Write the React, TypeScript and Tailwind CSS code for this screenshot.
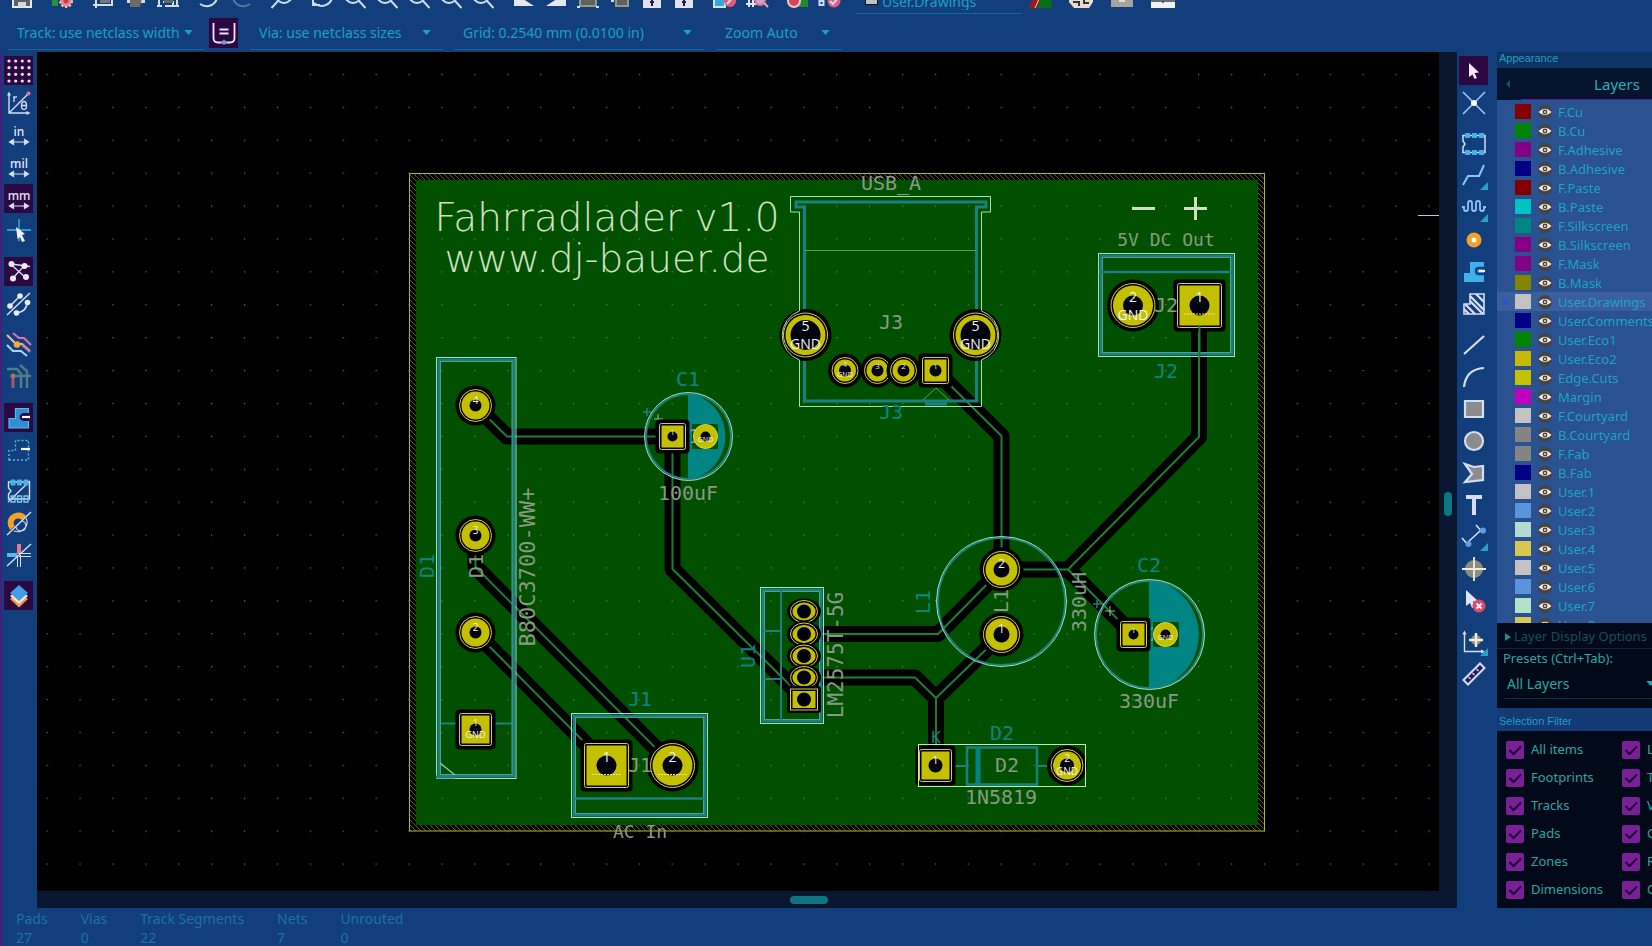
import { useState } from 'react'
import type { ReactNode } from 'react'

const layers = [
  ['F.Cu', '#840000'],
  ['B.Cu', '#008400'],
  ['F.Adhesive', '#840084'],
  ['B.Adhesive', '#000084'],
  ['F.Paste', '#840000'],
  ['B.Paste', '#00c2c2'],
  ['F.Silkscreen', '#008484'],
  ['B.Silkscreen', '#840084'],
  ['F.Mask', '#840084'],
  ['B.Mask', '#848400'],
  ['User.Drawings', '#c2c2c2'],
  ['User.Comments', '#000084'],
  ['User.Eco1', '#008400'],
  ['User.Eco2', '#c8b800'],
  ['Edge.Cuts', '#c2c200'],
  ['Margin', '#c200c2'],
  ['F.Courtyard', '#c2c2c2'],
  ['B.Courtyard', '#848484'],
  ['F.Fab', '#848484'],
  ['B.Fab', '#000084'],
  ['User.1', '#c2c2c2'],
  ['User.2', '#5994dc'],
  ['User.3', '#b4dbd2'],
  ['User.4', '#d8c852'],
  ['User.5', '#c2c2c2'],
  ['User.6', '#5994dc'],
  ['User.7', '#b4e2c8'],
  ['User.8', '#d8c852'],
]

const filters = [
  ['All items', 'Locked items'],
  ['Footprints', 'Text'],
  ['Tracks', 'Vias'],
  ['Pads', 'Graphics'],
  ['Zones', 'Rule Areas'],
  ['Dimensions', 'Other items'],
]

const stats = [
  ['Pads', '27'],
  ['Vias', '0'],
  ['Track Segments', '22'],
  ['Nets', '7'],
  ['Unrouted', '0'],
]

/* ---------- toolbar parts ---------- */

type ToolProps = { label: string; active?: boolean; sub?: boolean; children: ReactNode }

function Tool({ label, active, sub, children }: ToolProps) {
  return (
    <button
      aria-label={label}
      className={`relative flex h-[29px] w-[29px] shrink-0 items-center justify-center ${active ? 'bg-[#2c0840]' : ''}`}
    >
      <svg viewBox="0 0 24 24" className="h-6 w-6 overflow-visible" fill="none" stroke="#d5dcf5" strokeWidth="1.8">
        {children}
      </svg>
      {sub && (
        <svg viewBox="0 0 8 8" className="absolute right-0 bottom-0 h-2 w-2" fill="#22a5c6">
          <path d="M8 0V8H0Z" />
        </svg>
      )}
    </button>
  )
}

function TopTool({ label, children }: { label: string; children: ReactNode }) {
  return (
    <button aria-label={label} className="flex h-6 w-8 shrink-0 justify-center">
      <svg viewBox="0 0 24 24" className="h-6 w-6" fill="none" stroke="#c9dcf2" strokeWidth="2">
        {children}
      </svg>
    </button>
  )
}

const TopSep = () => <span className="w-[9px] shrink-0" />
const SideSep = () => <span className="h-[6px] shrink-0" />

const Arrows = () => <path d="M3 19H21M6.500 16.500L2.500 19L6.500 21.500ZM17.500 16.500L21.500 19L17.500 21.500Z" fill="#d5dcf5" strokeWidth="1.2" />

const UnitText = ({ children }: { children: string }) => (
  <text x="12" y="13" textAnchor="middle" fontSize="12" fill="#e2e4f8" stroke="none" className="font-['Noto_Sans',sans-serif] font-medium">
    {children}
  </text>
)

const ZoomGlass = () => (
  <>
    <circle cx="10" cy="10" r="8" />
    <path d="M16 16L22.500 23" />
  </>
)

function DropDown({ label, value, className }: { label: string; value: string; className: string }) {
  return (
    <div className={`grid shrink-0 items-center border-b border-[#12669a] ${className}`}>
      <select
        aria-label={label}
        className="col-start-1 row-start-1 h-full w-full appearance-none bg-transparent pl-[9px] text-[14px] text-[#1c9fc4] outline-none"
      >
        <option>{value}</option>
      </select>
      <svg viewBox="0 0 10 6" className="pointer-events-none col-start-1 row-start-1 mr-[12px] h-[5px] w-[9px] justify-self-end" fill="#1c9fc4">
        <path d="M0 0H10L5 6Z" />
      </svg>
    </div>
  )
}

function TopToolbar() {
  return (
    <div className="flex h-[14px] items-end overflow-hidden pl-[6px]">
      <div className="flex items-end pb-[5px]">
        <TopTool label="Save">
          <path d="M3 3H21V22H3Z" fill="#5a6068" stroke="#e6e8ee" />
          <path d="M8 17H16V22H8Z" fill="#d8d8d8" stroke="none" />
        </TopTool>
        <TopSep />
        <TopTool label="Board setup">
          <circle cx="15" cy="16" r="6" fill="#e88a8a" stroke="#f0d0c8" strokeDasharray="2 2" />
          <circle cx="15" cy="16" r="2.500" fill="#c83a4c" stroke="none" />
          <path d="M1 14H7V21H1Z" fill="#2a8f3a" stroke="none" />
        </TopTool>
        <TopSep />
        <TopTool label="Page settings">
          <path d="M4 4H20V20H4ZM1 20H20M4 23V14" stroke="#d8dce6" />
          <path d="M8 6H18V18H8Z" fill="#777" stroke="none" />
        </TopTool>
        <TopTool label="Print">
          <path d="M3 8H21V18H3Z" fill="#d8d8d8" stroke="none" />
          <path d="M6 13H18L16 22H6Z" fill="#6b6b66" stroke="none" />
        </TopTool>
        <TopTool label="Plot">
          <path d="M3 6V22M1 21H6M21 6V22M18 21H23M7 17H17V21H9" stroke="#d8dce6" />
          <path d="M8 10H17V18H8Z" fill="#666" stroke="none" />
        </TopTool>
        <TopSep />
        <TopTool label="Undo"><path d="M3 19C10 24 20 20 20 11" /></TopTool>
        <TopTool label="Redo"><path d="M21 19C14 24 4 20 4 11" stroke="#55779f" /></TopTool>
        <TopSep />
        <TopTool label="Find">
          <circle cx="14" cy="10" r="8" />
          <path d="M8 16L1.500 23" />
        </TopTool>
        <TopSep />
        <TopTool label="Refresh"><path d="M2 13V20H9M3 18C10 24 21 20 21 11" /></TopTool>
        <TopTool label="Zoom in"><ZoomGlass /></TopTool>
        <TopTool label="Zoom out"><ZoomGlass /></TopTool>
        <TopTool label="Zoom to page"><ZoomGlass /></TopTool>
        <TopTool label="Zoom to objects"><ZoomGlass /></TopTool>
        <TopTool label="Zoom to selection"><ZoomGlass /></TopTool>
        <TopSep />
        <TopTool label="Rotate counterclockwise"><path d="M2 8L22 21H2Z" fill="#e4e8f2" stroke="none" /></TopTool>
        <TopTool label="Rotate clockwise"><path d="M22 8L2 21H22Z" fill="#e4e8f2" stroke="none" /></TopTool>
        <TopTool label="Group">
          <path d="M4 4H20V21H4Z" fill="#5c635f" stroke="#9b9a7e" />
          <path d="M1 22H4M20 22H23" />
        </TopTool>
        <TopTool label="Ungroup">
          <path d="M8 8H20V21H8Z" fill="#5c635f" stroke="#9b9a7e" />
          <path d="M3 16H6" />
        </TopTool>
        <TopTool label="Lock">
          <path d="M3 8H21V23H3Z" fill="#e4e0ee" stroke="none" />
          <path d="M12 14V21M10 17H14" stroke="#222240" />
        </TopTool>
        <TopTool label="Unlock">
          <path d="M3 8H21V23H3Z" fill="#e4e0ee" stroke="none" />
          <path d="M12 14V21M10 17H14" stroke="#222240" />
        </TopTool>
        <TopSep />
        <TopTool label="Update board">
          <path d="M1 14H12V22H1Z" fill="#3aa6dc" stroke="#cfe8f8" />
          <circle cx="17" cy="16" r="6" fill="#e05a72" stroke="none" />
          <path d="M14 19L20 12" />
        </TopTool>
        <TopTool label="Footprint browser">
          <path d="M1 19H12M4 14V22M8 14V22" stroke="#e8e4f0" />
          <circle cx="15" cy="15" r="5" fill="#c9a4d2" stroke="#e0708a" />
          <path d="M19 18L23 22" stroke="#e9a9b4" />
        </TopTool>
        <TopSep />
        <TopTool label="3D viewer">
          <path d="M12 8H22V22H12Z" fill="#1f8a30" stroke="none" />
          <circle cx="8" cy="16" r="6" fill="#d2485a" stroke="#efc6ce" />
        </TopTool>
        <TopTool label="Design rules">
          <path d="M1.500 16H5.500V20H1.500Z" />
          <circle cx="16" cy="16" r="6.500" fill="#e0607c" stroke="none" />
          <path d="M12 16L15 19L20 13" />
        </TopTool>
        <TopSep />
      </div>
      <div className="flex h-6 w-[167px] shrink-0 items-end border-b border-[#12669a] pl-[10px]">
        <span className="mb-2 h-[13px] w-[13px] shrink-0 border border-[#101820] bg-[#c2c2c2]" />
        <select aria-label="Active layer" className="h-5 w-full appearance-none bg-transparent pb-[2px] pl-1 text-[14px] leading-4 text-[#1c9fc4] outline-none">
          <option>User.Drawings</option>
        </select>
      </div>
      <div className="flex items-end pb-1 pl-[2px]">
        <TopTool label="Layer pair">
          <path d="M0 22L8 8H12V22Z" fill="#a01818" stroke="none" />
          <path d="M9 22L14 8H22L24 22Z" fill="#0a6e14" stroke="none" />
          <path d="M7 22L12 11" strokeWidth="1" />
        </TopTool>
        <TopSep />
        <TopTool label="Scripting console">
          <path d="M0 8H24V16L20 22H5L0 16Z" fill="#e6dcd2" stroke="none" />
          <path d="M4 16H10V20M15 12V17H20" stroke="#333" />
        </TopTool>
        <TopSep />
        <TopTool label="Plugin">
          <path d="M1 8H23V21H1Z" fill="#a3a3a0" stroke="none" />
          <path d="M9 15H15" stroke="#ddd" />
        </TopTool>
        <TopSep />
        <TopTool label="Bill of materials">
          <path d="M0 8H24V22H0Z" fill="#eef2f2" stroke="none" />
          <path d="M0 15H24M12 15V17" stroke="#31434a" strokeWidth="1.500" />
        </TopTool>
      </div>
    </div>
  )
}

function OptionsBar() {
  return (
    <div className="flex h-[38px] items-start pt-[1px] pl-2">
      <DropDown label="Track width" value="Track: use netclass width" className="mr-1 h-[35px] w-[197px]" />
      <button aria-label="Auto track width" className="mt-[3px] mr-3 flex h-[30px] w-[29px] shrink-0 items-center justify-center bg-[#2c0840]">
        <svg viewBox="0 0 24 24" className="h-6 w-6" fill="none" stroke="#efe6fb" strokeWidth="1.800">
          <path d="M1.500 2V17Q1.500 21.500 6 21.500H18Q22.500 21.500 22.500 17V2M7.500 8.500H16.500M7.500 12.500H16.500" />
          <path d="M12 18.500L15.500 21.500L12 24L8.500 21.500Z" fill="#5f9fe0" stroke="none" />
        </svg>
      </button>
      <DropDown label="Via size" value="Via: use netclass sizes" className="mr-[11px] h-[35px] w-[193px]" />
      <DropDown label="Grid" value="Grid: 0.2540 mm (0.0100 in)" className="mr-3 h-[35px] w-[250px]" />
      <DropDown label="Zoom" value="Zoom Auto" className="h-[35px] w-[126px]" />
    </div>
  )
}

function LeftToolbar() {
  return (
    <nav aria-label="Display options" className="flex w-[37px] shrink-0 flex-col gap-[3px] border-l-2 border-[#43207a] pt-1 pl-[2px]">
      <Tool label="Show grid" active>
        {[2, 8.7, 15.3, 22].map((y) =>
          [2, 8.7, 15.3, 22].map((x) => <circle key={`${x}-${y}`} cx={x} cy={y} r="1.600" fill="#f3d9f0" stroke="none" />),
        )}
      </Tool>
      <Tool label="Polar coordinates">
        <path d="M2 3V22H21M2 22L22 2" strokeWidth="1.400" />
        <path d="M0 4.500L2 0.500L4 4.500ZM19.500 20L23.500 22L19.500 24Z" fill="#d5dcf5" stroke="none" />
        <circle cx="21.500" cy="2.500" r="2" fill="#e07a90" stroke="none" />
        <ellipse cx="17" cy="14.500" rx="2.500" ry="4" strokeWidth="1.300" />
        <path d="M14.500 14.500H19.500M7 11V5M7 7.500Q8 5.500 10 6" strokeWidth="1.300" />
      </Tool>
      <Tool label="Inches"><UnitText>in</UnitText><Arrows /></Tool>
      <Tool label="Mils"><UnitText>mil</UnitText><Arrows /></Tool>
      <Tool label="Millimeters" active><UnitText>mm</UnitText><Arrows /></Tool>
      <Tool label="Full window crosshair">
        <path d="M0 11H24M12 0V22" stroke="#3fb6e4" strokeWidth="1.300" />
        <path d="M9 8L18 15L15 16L18 22L15 23L13 18L10.500 20Z" fill="#f0f2ff" stroke="none" />
      </Tool>
      <SideSep />
      <Tool label="Show ratsnest" active>
        <path d="M4 4.500L18 17M6 18L17 6M4 4L23 6.500" strokeWidth="1.300" />
        <g fill="#f6e8ff" stroke="none">
          <circle cx="4.500" cy="4" r="3" /><circle cx="17.500" cy="6" r="3" /><circle cx="6" cy="18.500" r="3" /><circle cx="19" cy="17" r="3" />
        </g>
      </Tool>
      <Tool label="Curved ratsnest">
        <path d="M0 23L23 1M3 14L13 4M9 21Q20 20 20 10" strokeWidth="1.500" />
        <g fill="#e6ebff" stroke="none">
          <circle cx="3" cy="14" r="2.800" /><circle cx="13" cy="4" r="2.800" /><circle cx="9.500" cy="21" r="2.800" /><circle cx="20.500" cy="10.500" r="2.800" />
        </g>
      </Tool>
      <SideSep />
      <Tool label="Net highlight">
        <path d="M0 2L9 11H15L23 18" stroke="#f0b9a0" strokeWidth="2" />
        <path d="M6 0L12 5H17L24 12M15 12L23 19" stroke="#d076b4" strokeWidth="2" />
        <path d="M0 12L6 18H14L20 23" stroke="#a8d4f6" strokeWidth="2" />
        <circle cx="10" cy="11.500" r="3.300" fill="#f6a63c" stroke="none" />
      </Tool>
      <Tool label="Net colors">
        <path d="M0 4H10L14 9V23M13 0L20 6V23M6 11H24" stroke="#4f7d86" strokeWidth="2.400" />
        <path d="M6 11V23" stroke="#a05a6c" strokeWidth="3" />
        <circle cx="6" cy="11" r="2.500" fill="#a07a48" stroke="none" />
      </Tool>
      <SideSep />
      <Tool label="Filled zones" active>
        <path d="M2 22V12.500H8.500V2.500H21.500V22Z" fill="#2f8fd0" stroke="#58b8f0" strokeWidth="1.200" />
        <path d="M22 7.500H18Q13 7.500 13 11T18 14.500H22" fill="#2c0840" stroke="#2c0840" strokeWidth="1" />
        <path d="M15 11H23" stroke="#fff" strokeWidth="2.200" />
      </Tool>
      <Tool label="Zone outlines">
        <path d="M2 22V12.500H8.500V2.500H21.500V22Z" stroke="#58b8f0" strokeDasharray="2 2" strokeWidth="1.400" />
        <path d="M14 11H23" stroke="#fff" strokeWidth="2.200" />
      </Tool>
      <SideSep />
      <Tool label="Sketch footprints">
        <path d="M1.500 3H22.500V20H1.500V15L4 12L1.500 9ZM1 23L23 2" strokeWidth="1.400" />
        <path d="M4 1H8V6H4ZM10.500 1H14.500V6H10.500ZM17 1H21V6H17Z" fill="#45b2ea" stroke="#45b2ea" strokeWidth="1" />
        <path d="M4 17H8V23H4ZM10.500 17H14.500V23H10.500ZM17 17H21V23H17Z" stroke="#7ecdf4" strokeWidth="1.300" />
      </Tool>
      <Tool label="Sketch vias">
        <path d="M5.500 17A7 7 0 1 1 17 7" stroke="#f5a02a" strokeWidth="6" />
        <path d="M19 7A9.500 9.500 0 0 1 7 20M15 10A5 5 0 1 1 9 16" strokeWidth="1.100" />
        <path d="M0 24L24 1" strokeWidth="1.400" />
      </Tool>
      <Tool label="Sketch tracks">
        <path d="M0 12H10" stroke="#58b8f0" strokeWidth="4" />
        <path d="M12 1V11" stroke="#e87a8c" strokeWidth="4" />
        <path d="M10.500 12V24M13.500 12V24M12 10.500H24M12 13.500H24" strokeWidth="1" />
        <path d="M0 23L24 1" strokeWidth="1.400" />
      </Tool>
      <SideSep />
      <Tool label="Appearance manager" active>
        <path d="M3 15L12 8L21 15L12 23.500Z" fill="#f09a4a" stroke="none" />
        <path d="M3 12L12 5L21 12L12 20Z" fill="#f8e6c8" stroke="none" />
        <path d="M3 9L12 1L21 9L12 17Z" fill="#3f9fe8" stroke="none" />
      </Tool>
    </nav>
  )
}

function RightToolbar() {
  return (
    <nav aria-label="Drawing tools" className="flex w-[40px] shrink-0 flex-col gap-[3px] pt-1 pl-[2px]">
      <Tool label="Select" active>
        <path d="M7 4L17 13.500L12.500 14L15 19L12.500 20L10.500 15.500L7 18Z" fill="#f6e8ff" stroke="none" />
      </Tool>
      <Tool label="Local ratsnest">
        <path d="M1 1L23 23M23 1L1 23" stroke="#a9c4f0" strokeWidth="1.600" />
        <circle cx="12" cy="12" r="3" fill="#fff" stroke="none" />
      </Tool>
      <SideSep />
      <Tool label="Add footprint">
        <path d="M1 3.500H23V20.500H1V15L3 12L1 9Z" strokeWidth="1.500" />
        <path d="M3 1H8V6H3ZM10 1H15V6H10ZM17 1H22V6H17ZM3 18H8V23H3ZM10 18H15V23H10ZM17 18H22V23H17Z" fill="#45b2ea" stroke="none" />
      </Tool>
      <Tool label="Route track" sub><path d="M1 21L6 12H17L22 1" stroke="#8cc4f4" strokeWidth="2" /></Tool>
      <Tool label="Tune length" sub>
        <path d="M0 11H2V13Q2 15 4 15T6 13V7Q6 5 8 5T10 7V13Q10 15 12 15T14 13V7Q14 5 16 5T18 7V13Q18 15 20 15T22 13V11H24" stroke="#8cc4f4" />
      </Tool>
      <Tool label="Add via"><circle cx="12" cy="12" r="5" fill="#fff" stroke="#f5a02a" strokeWidth="5" /></Tool>
      <Tool label="Add zone">
        <path d="M2 22V13H8V2H22V22Z" fill="#3fb0ea" stroke="none" />
        <path d="M23 8H17Q14 8 14 11T17 14H22" stroke="#123f7c" strokeWidth="2.400" />
        <path d="M17 11H23" stroke="#fff" strokeWidth="2" />
      </Tool>
      <Tool label="Add rule area">
        <path d="M2 22V12H8V2H22V22Z" strokeWidth="1.600" />
        <path d="M8 4L22 18M8 9L21 22M14 2L22 10M3 12L13 22M2 17L7 22" strokeWidth="2.400" />
      </Tool>
      <SideSep />
      <Tool label="Draw line"><path d="M2 21L22 3" strokeWidth="2.200" /></Tool>
      <Tool label="Draw arc"><path d="M2 22Q4 4 22 3" strokeWidth="2.200" /></Tool>
      <Tool label="Draw rectangle"><path d="M3 4H21V20H3Z" fill="#8c8c8c" strokeWidth="2.200" /></Tool>
      <Tool label="Draw circle"><circle cx="12" cy="12" r="9" fill="#8c8c8c" strokeWidth="2.200" /></Tool>
      <Tool label="Draw polygon"><path d="M3 3L12 6L21 5V19L3 21L10 13Z" fill="#8c8c8c" strokeWidth="2.200" /></Tool>
      <Tool label="Add text"><path d="M4 4H20M12 4V22" strokeWidth="4" /></Tool>
      <Tool label="Add dimension" sub>
        <path d="M6 17L18 6M0 13L7 21M14 0L21 8" strokeWidth="1.600" />
        <circle cx="6.500" cy="19" r="3" fill="#58a0ec" stroke="none" /><circle cx="21" cy="5.500" r="3" fill="#58a0ec" stroke="none" />
      </Tool>
      <Tool label="Add target">
        <circle cx="12" cy="12" r="9" fill="#8c8c84" stroke="none" />
        <path d="M0 12H24M12 0V24" stroke="#f4ead8" strokeWidth="1.800" />
      </Tool>
      <Tool label="Delete">
        <path d="M4 1L16 12L11 12.500L13 18L10 19L8 14L4 17Z" fill="#e4e2f6" stroke="none" />
        <circle cx="17" cy="17" r="6.500" fill="#e2486a" stroke="none" />
        <path d="M14.500 14.500L19.500 19.500M19.500 14.500L14.500 19.500" stroke="#fff" />
      </Tool>
      <SideSep />
      <Tool label="Set origin" sub>
        <path d="M2.500 2V21.500H21" strokeWidth="1.400" />
        <path d="M0.500 4.500L2.500 0.500L4.500 4.500ZM19 19.500L23 21.500L19 23.500Z" fill="#d5dcf5" stroke="none" />
        <circle cx="14" cy="10" r="5" fill="#8c8c84" stroke="none" />
        <path d="M7 10H21M14 3V17" stroke="#f4ead8" strokeWidth="2.400" />
      </Tool>
      <Tool label="Measure">
        <path d="M1.500 18L18 1.500L22.500 6L6 22.500Z" fill="#2a1c58" strokeWidth="2" />
        <path d="M6.500 15L8.500 17M10.500 11L12.500 13M14.500 7L16.500 9" strokeWidth="1.400" />
      </Tool>
    </nav>
  )
}

/* ---------- board ---------- */

type PadProps = { x: number; y: number; r: number; hole: number; square?: boolean; n?: string; net?: string; size?: number }

function Pad({ x, y, r, hole, square, n, net, size = 14 }: PadProps) {
  const big = size > 11
  return (
    <g>
      {square ? (
        <>
          <rect x={x - r - 4} y={y - r - 4} width={2 * r + 8} height={2 * r + 8} rx="4" fill="#000" />
          <rect x={x - r} y={y - r} width={2 * r} height={2 * r} rx="2" stroke="#d6cf3c" fill="#000" />
          <rect x={x - r + 2} y={y - r + 2} width={2 * r - 4} height={2 * r - 4} fill="#c4c000" />
        </>
      ) : (
        <>
          <circle cx={x} cy={y} r={r + 4} fill="#000" />
          <circle cx={x} cy={y} r={r} stroke="#d6cf3c" fill="#000" />
          <circle cx={x} cy={y} r={r - 2} fill="#c4c000" />
        </>
      )}
      <circle cx={x} cy={y} r={hole} fill="#02020c" />
      {n && <text x={x} y={net || size > 12 ? y - 4 : y - 2} textAnchor="middle" fontSize={size} fill="#f4f4f4">{n}</text>}
      {net && <text x={x} y={big ? y + size : y + size - 1} textAnchor="middle" fontSize={size} fill="#f4f4f4">{net}</text>}
    </g>
  )
}

function Outline({ x, y, w, h }: { x: number; y: number; w: number; h: number }) {
  return (
    <g fill="none">
      <rect x={x + 2.5} y={y + 2.5} width={w - 5} height={h - 5} stroke="#1a7f80" strokeWidth="3" />
      <rect x={x + 4} y={y + 4} width={w - 8} height={h - 8} stroke="#4f9f92" strokeWidth="1" />
      <rect x={x} y={y} width={w} height={h} stroke="#a5e0c0" strokeWidth="1" />
    </g>
  )
}

type LabelProps = { x: number; y: number; teal?: boolean; turn?: boolean; size?: number; children: string }

// turned labels keep x as the baseline and y as the middle of the text
function Label({ x, y, teal, turn, size = 20, children }: LabelProps) {
  return (
    <text
      x={x}
      y={y}
      textAnchor="middle"
      fontSize={size}
      fill={teal ? '#0b8486' : '#869a84'}
      transform={turn ? `rotate(-90 ${x} ${y})` : undefined}
      className="font-['DejaVu_Sans_Mono',monospace]"
    >
      {children}
    </text>
  )
}

const tracks = [
  'M475 405L507 436.500H672',
  'M672.500 436.500V569L804 699',
  'M475.500 535V567L672.500 765',
  'M475.500 632.500L607 765',
  'M804 634H938L1001.500 569.500',
  'M804 677.500H915L936 698V765',
  'M936 698L1001.500 634.500',
  'M935.500 370.500L1001.500 436V569.500H1068L1199 437V305',
  'M1068 569.500L1133 634.500',
]

function Board() {
  return (
    <svg
      viewBox="37 52 1402 839"
      preserveAspectRatio="xMidYMid slice"
      className="absolute inset-0 h-full w-full font-['Open_Sans',sans-serif]"
      role="img"
      aria-label="Board layout"
    >
      <defs>
        <pattern id="grid" x="30.600" y="57.900" width="32.900" height="32.900" patternUnits="userSpaceOnUse">
          <rect x="16" y="16" width="1.200" height="1.200" fill="#6f7f6f" />
        </pattern>
        <pattern id="edge" width="5" height="5" patternUnits="userSpaceOnUse">
          <path d="M-1 -1L6 6M-1 4L1 6M4 -1L6 1" stroke="#5c5c10" strokeWidth="1" />
        </pattern>
      </defs>

      <rect x="409.500" y="173.500" width="855" height="657.500" fill="#000" />
      <rect x="409.500" y="173.500" width="855" height="657.500" fill="url(#edge)" stroke="#b4b432" />
      <rect x="416" y="180" width="842" height="645" fill="#005000" />
      <rect x="37" y="52" width="1402" height="839" fill="url(#grid)" />

      {/* tracks with their clearance */}
      <g fill="none" strokeLinejoin="round">
        {tracks.map((d) => <path key={d} d={d} stroke="#000" strokeWidth="16" />)}
        {tracks.map((d) => <path key={d} d={d} stroke="#1c8034" strokeWidth="2" />)}
      </g>

      <g fill="#cfe0c4" className="font-['DejaVu_Sans','DejaVu_Sans_Light',sans-serif] font-extralight">
        <text x="607" y="231" textAnchor="middle" fontSize="39">Fahrradlader v1.0</text>
        <text x="607" y="272" textAnchor="middle" fontSize="39">www.dj-bauer.de</text>
      </g>

      {/* J3 */}
      <Label x={891} y={190}>USB_A</Label>
      <path d="M796 202H986V207H976.500V401H804.500V207H796Z" fill="none" stroke="#1a8080" strokeWidth="3" />
      <path d="M804.500 250.500H976.500" stroke="#4f9a5c" />
      <path d="M923 400L936 388L949 400" fill="none" stroke="#5c9a70" />
      <path d="M925 404H947" stroke="#1a8080" strokeWidth="3" />
      <Pad x={805.5} y={335} r={22} hole={15} n="5" net="GND" />
      <Pad x={975.5} y={335} r={22} hole={15} n="5" net="GND" />
      <path
        d="M790.500 196.500H990.500V212H981.500V311A26 26 0 0 1 981.500 360V406.500H799.500V360A26 26 0 0 1 799.500 311V212H790.500Z"
        fill="none"
        stroke="#a5e0b8"
      />
      <Pad x={845} y={370.5} r={13} hole={6} n="4" net="GND" size={7} />
      <Pad x={877.5} y={370.5} r={13} hole={6} n="3" size={8} />
      <Pad x={903.5} y={370.5} r={13} hole={6} n="2" size={8} />
      <Pad x={935.5} y={370.5} r={13} hole={6} square n="1" size={8} />
      <Label x={891} y={329}>J3</Label>
      <Label x={891} y={419} teal>J3</Label>

      {/* J2 */}
      <path d="M1132 208.500H1155M1184 208.500H1207M1195.500 197V220" stroke="#cfe0c4" strokeWidth="3" />
      <Label x={1166} y={246} size={18}>5V DC Out</Label>
      <Outline x={1098.5} y={253.500} w={136} h={103} />
      <path d="M1101 272H1232" stroke="#1a8080" strokeWidth="2.500" />
      <Label x={1166} y={378} teal>J2</Label>
      <Pad x={1133} y={305.5} r={22} hole={10} n="2" net="GND" />
      <Pad x={1199.5} y={305.5} r={22} hole={10} square n="1" />
      <Label x={1166} y={312}>J2</Label>
      <path d="M1199.500 325V357" stroke="#1c8034" strokeWidth="2" />
      <path d="M1184 314H1215" stroke="#e8e6a0" strokeDasharray="2 1" />

      {/* D1 */}
      <path d="M439 723.500H514" stroke="#1a8080" strokeWidth="2" />
      <Outline x={436.5} y={357.5} w={79.5} h={421} />
      <path d="M440 763L455 775" stroke="#8ac8b0" strokeWidth="1.500" />
      <path d="M436 777H455" stroke="#1a8080" strokeWidth="3" />
      <Pad x={475.5} y={405.5} r={16} hole={6} n="4" size={10} />
      <Pad x={475.5} y={535.5} r={16} hole={6} n="3" size={10} />
      <Pad x={475.5} y={632.5} r={16} hole={6} n="2" size={10} />
      <Pad x={475.5} y={729.5} r={16} hole={6} square n="1" net="GND" size={9} />
      <Label x={434} y={566} teal turn>D1</Label>
      <Label x={483} y={566} turn>D1</Label>
      <Label x={535} y={567} size={22} turn>B80C3700-WW+</Label>

      {/* J1 */}
      <Outline x={571.5} y={713.5} w={136} h={104} />
      <path d="M574 798.500H705" stroke="#1a8080" strokeWidth="2.500" />
      <Label x={640} y={706} teal>J1</Label>
      <Pad x={606.5} y={765.5} r={22} hole={10} square n="1" />
      <Pad x={672.5} y={765.5} r={22} hole={10} n="2" />
      <Label x={640} y={772}>J1</Label>
      <path d="M592 774.500H622M658 774.500H688" stroke="#e8e6a0" strokeDasharray="2 1" />
      <Label x={640} y={838} size={18}>AC In</Label>

      {/* C1 */}
      <path d="M688 393A44 44 0 0 1 688 480Z" fill="#008484" />
      <circle cx="688.500" cy="436.500" r="42.500" fill="none" stroke="#1a8080" strokeWidth="2" />
      <circle cx="688.500" cy="436.500" r="44" fill="none" stroke="#a5e0c0" />
      <path d="M643 412H651M647 408V416" stroke="#1a8080" strokeWidth="1.500" />
      <path d="M654 419H663M658 414V423" stroke="#9ab890" />
      <rect x="692" y="424" width="26" height="25" fill="#005000" />
      <Label x={688} y={443}>C1</Label>
      <Pad x={672.5} y={436.5} r={13} hole={5} square n="1" size={8} />
      <circle cx="705.500" cy="436.500" r="12" fill="#c4c000" stroke="#e0d84a" />
      <circle cx="705.500" cy="436.500" r="5" fill="#02020c" />
      <text x="705.500" y="442" textAnchor="middle" fontSize="7" fill="#f4f4f4">GND</text>
      <Label x={688} y={386} teal>C1</Label>
      <Label x={688} y={500}>100uF</Label>

      {/* U1 */}
      <Outline x={760.5} y={587.5} w={63} h={136} />
      <path d="M781 590V721M763 631H780M763 679H780" stroke="#1a8080" strokeWidth="2" />
      {[611.5, 634, 656, 677.5].map((y) => (
        <g key={y}>
          <ellipse cx="804" cy={y} rx="17" ry="13" fill="#000" />
          <ellipse cx="804" cy={y} rx="13.500" ry="11" fill="#000" stroke="#d6cf3c" />
          <ellipse cx="804" cy={y} rx="11.500" ry="9" fill="#c4c000" />
          <circle cx="804" cy={y} r="7" fill="#02020c" />
        </g>
      ))}
      <rect x="787" y="686" width="34" height="27" rx="3" fill="#000" />
      <rect x="790.500" y="689" width="27" height="21" fill="#000" stroke="#d6cf3c" />
      <rect x="792.500" y="691" width="23" height="17" fill="#c4c000" />
      <circle cx="804" cy="699.500" r="7" fill="#02020c" />
      <Label x={755} y={656} teal turn>U1</Label>
      <Label x={843} y={655} size={21} turn>LM2575T-5G</Label>

      {/* L1 */}
      <circle cx="1001.500" cy="601.500" r="63.500" fill="none" stroke="#1a8080" strokeWidth="2" />
      <circle cx="1001.500" cy="601.500" r="65" fill="none" stroke="#a5e0c0" />
      <Pad x={1001.5} y={569.5} r={18} hole={8} n="2" size={12} />
      <Pad x={1001.5} y={634.5} r={18} hole={8} n="1" size={12} />
      <Label x={1008} y={601} turn>L1</Label>
      <Label x={930} y={602} teal turn>L1</Label>
      <Label x={1086} y={602} turn>330uH</Label>

      {/* D2 */}
      <path d="M952 766H967M1037 766H1050" stroke="#1a8080" strokeWidth="2" />
      <rect x="967" y="747.500" width="70" height="37" fill="none" stroke="#1a8080" strokeWidth="2.500" />
      <path d="M978 748V784" stroke="#008484" strokeWidth="5" />
      <Pad x={935.5} y={765.5} r={16} hole={7} square n="1" size={11} />
      <Pad x={1067} y={765.5} r={16} hole={7} n="2" net="GND" size={10} />
      <rect x="918.500" y="744.500" width="167" height="42" fill="none" stroke="#c4e8c4" />
      <Label x={936} y={743} size={16} teal>K</Label>
      <Label x={1002} y={740} teal>D2</Label>
      <Label x={1007} y={772}>D2</Label>
      <Label x={1001} y={804}>1N5819</Label>

      {/* C2 */}
      <path d="M1149 580A55 55 0 0 1 1149 689.500Z" fill="#008484" />
      <circle cx="1149.500" cy="634.500" r="53.500" fill="none" stroke="#1a8080" strokeWidth="2" />
      <circle cx="1149.500" cy="634.500" r="55" fill="none" stroke="#a5e0c0" />
      <path d="M1093 604H1101M1097 600V608" stroke="#1a8080" strokeWidth="1.500" />
      <path d="M1105 611H1115M1110 606V616" stroke="#9ab890" />
      <Label x={1149} y={641}>C2</Label>
      <Pad x={1133.5} y={634.5} r={13} hole={5} square n="1" size={8} />
      <rect x="1153" y="622" width="26" height="25" fill="#005000" />
      <circle cx="1165.500" cy="634.500" r="12" fill="#c4c000" stroke="#e0d84a" />
      <circle cx="1165.500" cy="634.500" r="5" fill="#02020c" />
      <text x="1165.500" y="640" textAnchor="middle" fontSize="7" fill="#f4f4f4">GND</text>
      <Label x={1149} y={572} teal>C2</Label>
      <Label x={1149} y={708}>330uF</Label>

      <path d="M1418 215.500H1439" stroke="#c8c8c8" />
    </svg>
  )
}

/* ---------- side panels ---------- */

function AppearancePanel() {
  const [current, setCurrent] = useState('User.Drawings')

  return (
    <section className="flex min-h-0 flex-1 flex-col">
      <h2 className="h-4 shrink-0 bg-[#0e3365] pl-[2px] font-['Liberation_Sans',sans-serif] text-[11px] leading-[13px] text-[#1c9fc4]">
        Appearance
      </h2>
      <div className="flex h-8 shrink-0 items-center bg-[#05142e] pl-2">
        <button aria-label="Previous tab" className="w-4 shrink-0 text-[#17506a]">
          <svg viewBox="0 0 6 8" className="h-2 w-[6px]" fill="currentColor"><path d="M5 0V8L1 4Z" /></svg>
        </button>
        <button className="h-full w-[192px] shrink-0 border-b border-[#5c1e80] text-[15px] leading-8 text-[#26b0b8]">Layers</button>
      </div>
      <ul className="min-h-0 flex-1 overflow-hidden bg-[#2a5190] pt-[2px]">
        {layers.map(([name, color]) => (
          <li key={name} className={`flex h-[19px] items-center ${current === name ? 'bg-[#3a5e9e]' : ''}`}>
            <span className="flex w-[18px] shrink-0 justify-center">
              {current === name && (
                <svg viewBox="0 0 6 8" className="h-2 w-[6px]" fill="#2f4fd0"><path d="M0 0L6 4L0 8Z" /></svg>
              )}
            </span>
            <span className="h-[15px] w-4 shrink-0" style={{ backgroundColor: color }} />
            <button aria-label={`Toggle ${name}`} className="ml-[7px] shrink-0">
              <svg viewBox="0 0 14 14" className="h-[14px] w-[14px]">
                <circle cx="7" cy="7" r="7" fill="#474340" />
                <path d="M0.500 7Q7 0.500 13.500 7Q7 13.500 0.500 7Z" fill="#f0eae4" />
                <circle cx="7" cy="7" r="2.400" fill="#474340" />
                <circle cx="7" cy="7" r="1" fill="#f0eae4" />
              </svg>
            </button>
            <button onClick={() => setCurrent(name)} className="ml-[6px] pt-[1px] text-[13px] leading-[18px] whitespace-nowrap text-[#1fa3c0]">
              {name}
            </button>
          </li>
        ))}
      </ul>
      <div className="shrink-0 overflow-hidden bg-[#020a1a] text-[#2aa5a8]">
        <button className="flex h-[26px] w-full items-center gap-[3px] border-b border-[#0f2434] pt-[2px] pl-2 text-[13px] whitespace-nowrap text-[#14505c]">
          <svg viewBox="0 0 6 8" className="h-2 w-[6px] shrink-0" fill="#1d8a8c"><path d="M0 0L6 4L0 8Z" /></svg>
          Layer Display Options
        </button>
        <label htmlFor="presets" className="block pl-[6px] text-[13px] leading-[19px] whitespace-nowrap">Presets (Ctrl+Tab):</label>
        <div className="ml-[6px] grid h-[31px] w-[152px] items-center border-b border-[#123040]">
          <select id="presets" className="col-start-1 row-start-1 h-full w-full appearance-none bg-transparent pl-1 text-[14px] outline-none">
            <option>All Layers</option>
          </select>
          <svg viewBox="0 0 10 6" className="pointer-events-none col-start-1 row-start-1 h-[5px] w-[9px] justify-self-end" fill="#26a0a8">
            <path d="M0 0H10L5 6Z" />
          </svg>
        </div>
        <div className="h-[9px]" />
      </div>
    </section>
  )
}

function CheckItem({ label }: { label: string }) {
  return (
    <label className="flex h-7 items-center gap-[7px] whitespace-nowrap">
      <span className="grid h-[18px] w-[18px] shrink-0">
        <input type="checkbox" defaultChecked className="peer col-start-1 row-start-1 appearance-none rounded-[2px] bg-[#3a1850] checked:bg-[#7a1f98]" />
        <svg viewBox="0 0 18 18" className="pointer-events-none col-start-1 row-start-1 opacity-0 peer-checked:opacity-100" fill="none" stroke="#1c0638" strokeWidth="2">
          <path d="M3.500 9L7.500 13L15 5.500" />
        </svg>
      </span>
      {label}
    </label>
  )
}

function SelectionFilter() {
  return (
    <section className="shrink-0">
      <h2 className="h-[23px] bg-[#133a74] pt-[1px] pl-[2px] font-['Liberation_Sans',sans-serif] text-[11px] leading-[25px] text-[#1c9fc4]">
        Selection Filter
      </h2>
      <div className="overflow-hidden bg-[#020a1a] pt-[5px] pb-1 pl-[9px] text-[13px] text-[#2aa5a8]">
        <div className="grid grid-cols-[116px_120px]">
          {filters.map(([a, b]) => [<CheckItem key={a} label={a} />, <CheckItem key={b} label={b} />])}
        </div>
      </div>
    </section>
  )
}

export default function App() {
  return (
    <div className="flex h-screen w-full flex-col overflow-hidden bg-[#123f7c] font-['Noto_Sans',sans-serif]">
      <header className="shrink-0">
        <TopToolbar />
        <OptionsBar />
      </header>

      <div className="flex min-h-0 flex-1">
        <LeftToolbar />
        <main className="flex min-w-0 flex-1 flex-col bg-[#08172f]">
          <div className="flex min-h-0 flex-1">
            <div className="relative min-w-0 flex-1 overflow-hidden bg-black">
              <Board />
            </div>
            <div className="flex w-[18px] shrink-0 flex-col items-center justify-center pt-[64px]">
              <span className="h-[24px] w-2 rounded-full bg-[#0d7480]" />
            </div>
          </div>
          <div className="flex h-[17px] shrink-0 items-center justify-center pl-[124px]">
            <span className="h-2 w-[38px] rounded-full bg-[#0d7480]" />
          </div>
        </main>
        <RightToolbar />
        <aside className="flex w-[155px] shrink-0 flex-col overflow-hidden">
          <AppearancePanel />
          <SelectionFilter />
        </aside>
      </div>

      <footer className="flex h-[38px] shrink-0 gap-[33px] overflow-hidden border-l-2 border-[#43207a] pt-[1px] pl-[14px] text-[14px] leading-[19px] text-[#1d70a4]">
        {stats.map(([name, value]) => (
          <dl key={name}>
            <dt>{name}</dt>
            <dd>{value}</dd>
          </dl>
        ))}
      </footer>
    </div>
  )
}
